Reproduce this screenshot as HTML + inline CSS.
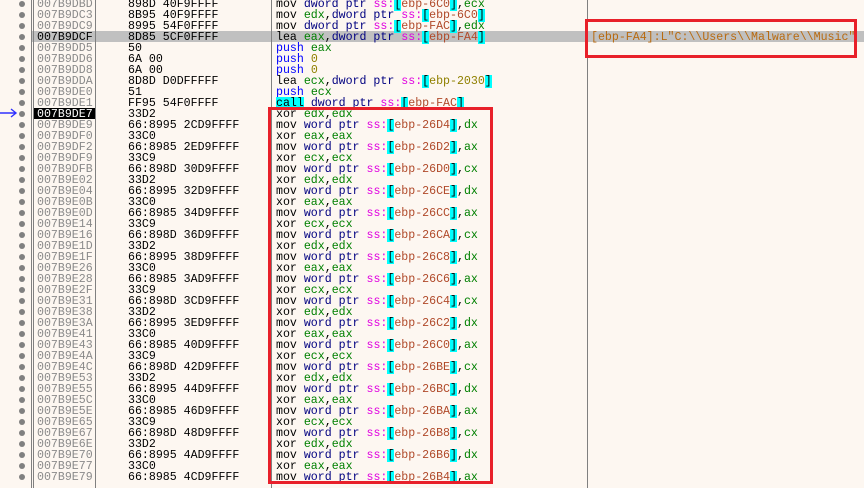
<!DOCTYPE html>
<html><head><meta charset="utf-8"><style>
body{margin:0;width:864px;height:488px;background:#fdf7f1;position:relative;overflow:hidden;font-family:"Liberation Mono",monospace;font-size:11.6px;}
.row{position:absolute;left:0;width:864px;height:11px;line-height:11px;white-space:pre;}
.row span.a,.row span.h,.row span.d{top:1px;}
.row span.a{position:absolute;left:37px;color:#8a8a8a;}
.row span.h{position:absolute;left:128px;color:#000;}
.row span.d{position:absolute;left:276px;color:#000;}
.dot{position:absolute;left:19px;top:3px;width:6px;height:6px;border-radius:50%;background:#808080;}
.r{color:#008000}.p{color:#000080}.s{color:#e000e0}.b{background:#00ffff;color:#000}.e{color:#b04a2a}.n{color:#908000}.u{color:#0000ff}
.vl{position:absolute;top:0;height:488px;width:1px;background:#808080;}
.box{position:absolute;border:3px solid #e8202a;box-sizing:border-box;}
</style></head><body>
<div style="position:absolute;left:32px;top:31px;width:832px;height:11px;background:#c0c0c0"></div>
<div style="position:absolute;left:33px;top:108px;width:62px;height:11px;background:#000"></div>
<div class="vl" style="left:31px"></div><div class="vl" style="left:33px"></div><div class="vl" style="left:95px"></div><div class="vl" style="left:271px"></div><div class="vl" style="left:587px"></div>

<div class="row" style="top:-2px"><i class="dot"></i><span class="a">007B9DBD</span><span class="h">898D 40F9FFFF</span><span class="d">mov <span class="p">dword ptr</span> <span class="s">ss:</span><span class="b">[</span><span class="e">ebp-6C0</span><span class="b">]</span>,<span class="r">ecx</span></span></div>
<div class="row" style="top:9px"><i class="dot"></i><span class="a">007B9DC3</span><span class="h">8B95 40F9FFFF</span><span class="d">mov <span class="r">edx</span>,<span class="p">dword ptr</span> <span class="s">ss:</span><span class="b">[</span><span class="e">ebp-6C0</span><span class="b">]</span></span></div>
<div class="row" style="top:20px"><i class="dot"></i><span class="a">007B9DC9</span><span class="h">8995 54F0FFFF</span><span class="d">mov <span class="p">dword ptr</span> <span class="s">ss:</span><span class="b">[</span><span class="e">ebp-FAC</span><span class="b">]</span>,<span class="r">edx</span></span></div>
<div class="row" style="top:31px"><i class="dot"></i><span class="a" style="color:#000">007B9DCF</span><span class="h">8D85 5CF0FFFF</span><span class="d">lea <span class="r">eax</span>,<span class="p">dword ptr</span> <span class="s">ss:</span><span class="b">[</span><span class="e">ebp-FA4</span><span class="b">]</span></span><span style="position:absolute;left:591px;top:1px;color:#b86a10">[ebp-FA4]:L"C:\\Users\\Malware\\Music"</span></div>
<div class="row" style="top:42px"><i class="dot"></i><span class="a">007B9DD5</span><span class="h">50</span><span class="d"><span class="u">push</span> <span class="r">eax</span></span></div>
<div class="row" style="top:53px"><i class="dot"></i><span class="a">007B9DD6</span><span class="h">6A 00</span><span class="d"><span class="u">push</span> <span class="n">0</span></span></div>
<div class="row" style="top:64px"><i class="dot"></i><span class="a">007B9DD8</span><span class="h">6A 00</span><span class="d"><span class="u">push</span> <span class="n">0</span></span></div>
<div class="row" style="top:75px"><i class="dot"></i><span class="a">007B9DDA</span><span class="h">8D8D D0DFFFFF</span><span class="d">lea <span class="r">ecx</span>,<span class="p">dword ptr</span> <span class="s">ss:</span><span class="b">[</span><span class="n">ebp-2030</span><span class="b">]</span></span></div>
<div class="row" style="top:86px"><i class="dot"></i><span class="a">007B9DE0</span><span class="h">51</span><span class="d"><span class="u">push</span> <span class="r">ecx</span></span></div>
<div class="row" style="top:97px"><i class="dot"></i><span class="a">007B9DE1</span><span class="h">FF95 54F0FFFF</span><span class="d"><span class="b">call</span> <span class="p">dword ptr</span> <span class="s">ss:</span><span class="b">[</span><span class="e">ebp-FAC</span><span class="b">]</span></span></div>
<div class="row" style="top:108px"><i class="dot"></i><span class="a" style="color:#fff">007B9DE7</span><span class="h">33D2</span><span class="d">xor <span class="r">edx</span>,<span class="r">edx</span></span></div>
<div class="row" style="top:119px"><i class="dot"></i><span class="a">007B9DE9</span><span class="h">66:8995 2CD9FFFF</span><span class="d">mov <span class="p">word ptr</span> <span class="s">ss:</span><span class="b">[</span><span class="e">ebp-26D4</span><span class="b">]</span>,<span class="r">dx</span></span></div>
<div class="row" style="top:130px"><i class="dot"></i><span class="a">007B9DF0</span><span class="h">33C0</span><span class="d">xor <span class="r">eax</span>,<span class="r">eax</span></span></div>
<div class="row" style="top:141px"><i class="dot"></i><span class="a">007B9DF2</span><span class="h">66:8985 2ED9FFFF</span><span class="d">mov <span class="p">word ptr</span> <span class="s">ss:</span><span class="b">[</span><span class="e">ebp-26D2</span><span class="b">]</span>,<span class="r">ax</span></span></div>
<div class="row" style="top:152px"><i class="dot"></i><span class="a">007B9DF9</span><span class="h">33C9</span><span class="d">xor <span class="r">ecx</span>,<span class="r">ecx</span></span></div>
<div class="row" style="top:163px"><i class="dot"></i><span class="a">007B9DFB</span><span class="h">66:898D 30D9FFFF</span><span class="d">mov <span class="p">word ptr</span> <span class="s">ss:</span><span class="b">[</span><span class="e">ebp-26D0</span><span class="b">]</span>,<span class="r">cx</span></span></div>
<div class="row" style="top:174px"><i class="dot"></i><span class="a">007B9E02</span><span class="h">33D2</span><span class="d">xor <span class="r">edx</span>,<span class="r">edx</span></span></div>
<div class="row" style="top:185px"><i class="dot"></i><span class="a">007B9E04</span><span class="h">66:8995 32D9FFFF</span><span class="d">mov <span class="p">word ptr</span> <span class="s">ss:</span><span class="b">[</span><span class="e">ebp-26CE</span><span class="b">]</span>,<span class="r">dx</span></span></div>
<div class="row" style="top:196px"><i class="dot"></i><span class="a">007B9E0B</span><span class="h">33C0</span><span class="d">xor <span class="r">eax</span>,<span class="r">eax</span></span></div>
<div class="row" style="top:207px"><i class="dot"></i><span class="a">007B9E0D</span><span class="h">66:8985 34D9FFFF</span><span class="d">mov <span class="p">word ptr</span> <span class="s">ss:</span><span class="b">[</span><span class="e">ebp-26CC</span><span class="b">]</span>,<span class="r">ax</span></span></div>
<div class="row" style="top:218px"><i class="dot"></i><span class="a">007B9E14</span><span class="h">33C9</span><span class="d">xor <span class="r">ecx</span>,<span class="r">ecx</span></span></div>
<div class="row" style="top:229px"><i class="dot"></i><span class="a">007B9E16</span><span class="h">66:898D 36D9FFFF</span><span class="d">mov <span class="p">word ptr</span> <span class="s">ss:</span><span class="b">[</span><span class="e">ebp-26CA</span><span class="b">]</span>,<span class="r">cx</span></span></div>
<div class="row" style="top:240px"><i class="dot"></i><span class="a">007B9E1D</span><span class="h">33D2</span><span class="d">xor <span class="r">edx</span>,<span class="r">edx</span></span></div>
<div class="row" style="top:251px"><i class="dot"></i><span class="a">007B9E1F</span><span class="h">66:8995 38D9FFFF</span><span class="d">mov <span class="p">word ptr</span> <span class="s">ss:</span><span class="b">[</span><span class="e">ebp-26C8</span><span class="b">]</span>,<span class="r">dx</span></span></div>
<div class="row" style="top:262px"><i class="dot"></i><span class="a">007B9E26</span><span class="h">33C0</span><span class="d">xor <span class="r">eax</span>,<span class="r">eax</span></span></div>
<div class="row" style="top:273px"><i class="dot"></i><span class="a">007B9E28</span><span class="h">66:8985 3AD9FFFF</span><span class="d">mov <span class="p">word ptr</span> <span class="s">ss:</span><span class="b">[</span><span class="e">ebp-26C6</span><span class="b">]</span>,<span class="r">ax</span></span></div>
<div class="row" style="top:284px"><i class="dot"></i><span class="a">007B9E2F</span><span class="h">33C9</span><span class="d">xor <span class="r">ecx</span>,<span class="r">ecx</span></span></div>
<div class="row" style="top:295px"><i class="dot"></i><span class="a">007B9E31</span><span class="h">66:898D 3CD9FFFF</span><span class="d">mov <span class="p">word ptr</span> <span class="s">ss:</span><span class="b">[</span><span class="e">ebp-26C4</span><span class="b">]</span>,<span class="r">cx</span></span></div>
<div class="row" style="top:306px"><i class="dot"></i><span class="a">007B9E38</span><span class="h">33D2</span><span class="d">xor <span class="r">edx</span>,<span class="r">edx</span></span></div>
<div class="row" style="top:317px"><i class="dot"></i><span class="a">007B9E3A</span><span class="h">66:8995 3ED9FFFF</span><span class="d">mov <span class="p">word ptr</span> <span class="s">ss:</span><span class="b">[</span><span class="e">ebp-26C2</span><span class="b">]</span>,<span class="r">dx</span></span></div>
<div class="row" style="top:328px"><i class="dot"></i><span class="a">007B9E41</span><span class="h">33C0</span><span class="d">xor <span class="r">eax</span>,<span class="r">eax</span></span></div>
<div class="row" style="top:339px"><i class="dot"></i><span class="a">007B9E43</span><span class="h">66:8985 40D9FFFF</span><span class="d">mov <span class="p">word ptr</span> <span class="s">ss:</span><span class="b">[</span><span class="e">ebp-26C0</span><span class="b">]</span>,<span class="r">ax</span></span></div>
<div class="row" style="top:350px"><i class="dot"></i><span class="a">007B9E4A</span><span class="h">33C9</span><span class="d">xor <span class="r">ecx</span>,<span class="r">ecx</span></span></div>
<div class="row" style="top:361px"><i class="dot"></i><span class="a">007B9E4C</span><span class="h">66:898D 42D9FFFF</span><span class="d">mov <span class="p">word ptr</span> <span class="s">ss:</span><span class="b">[</span><span class="e">ebp-26BE</span><span class="b">]</span>,<span class="r">cx</span></span></div>
<div class="row" style="top:372px"><i class="dot"></i><span class="a">007B9E53</span><span class="h">33D2</span><span class="d">xor <span class="r">edx</span>,<span class="r">edx</span></span></div>
<div class="row" style="top:383px"><i class="dot"></i><span class="a">007B9E55</span><span class="h">66:8995 44D9FFFF</span><span class="d">mov <span class="p">word ptr</span> <span class="s">ss:</span><span class="b">[</span><span class="e">ebp-26BC</span><span class="b">]</span>,<span class="r">dx</span></span></div>
<div class="row" style="top:394px"><i class="dot"></i><span class="a">007B9E5C</span><span class="h">33C0</span><span class="d">xor <span class="r">eax</span>,<span class="r">eax</span></span></div>
<div class="row" style="top:405px"><i class="dot"></i><span class="a">007B9E5E</span><span class="h">66:8985 46D9FFFF</span><span class="d">mov <span class="p">word ptr</span> <span class="s">ss:</span><span class="b">[</span><span class="e">ebp-26BA</span><span class="b">]</span>,<span class="r">ax</span></span></div>
<div class="row" style="top:416px"><i class="dot"></i><span class="a">007B9E65</span><span class="h">33C9</span><span class="d">xor <span class="r">ecx</span>,<span class="r">ecx</span></span></div>
<div class="row" style="top:427px"><i class="dot"></i><span class="a">007B9E67</span><span class="h">66:898D 48D9FFFF</span><span class="d">mov <span class="p">word ptr</span> <span class="s">ss:</span><span class="b">[</span><span class="e">ebp-26B8</span><span class="b">]</span>,<span class="r">cx</span></span></div>
<div class="row" style="top:438px"><i class="dot"></i><span class="a">007B9E6E</span><span class="h">33D2</span><span class="d">xor <span class="r">edx</span>,<span class="r">edx</span></span></div>
<div class="row" style="top:449px"><i class="dot"></i><span class="a">007B9E70</span><span class="h">66:8995 4AD9FFFF</span><span class="d">mov <span class="p">word ptr</span> <span class="s">ss:</span><span class="b">[</span><span class="e">ebp-26B6</span><span class="b">]</span>,<span class="r">dx</span></span></div>
<div class="row" style="top:460px"><i class="dot"></i><span class="a">007B9E77</span><span class="h">33C0</span><span class="d">xor <span class="r">eax</span>,<span class="r">eax</span></span></div>
<div class="row" style="top:471px"><i class="dot"></i><span class="a">007B9E79</span><span class="h">66:8985 4CD9FFFF</span><span class="d">mov <span class="p">word ptr</span> <span class="s">ss:</span><span class="b">[</span><span class="e">ebp-26B4</span><span class="b">]</span>,<span class="r">ax</span></span></div>

<svg style="position:absolute;left:0;top:107px" width="20" height="12"><path d="M0 6H16M11 2L16 6L11 10" stroke="#3030ff" stroke-width="1.4" fill="none"/></svg>
<div class="box" style="left:585px;top:19px;width:272px;height:39px"></div>
<div class="box" style="left:268px;top:107px;width:225px;height:377px"></div>
</body></html>
